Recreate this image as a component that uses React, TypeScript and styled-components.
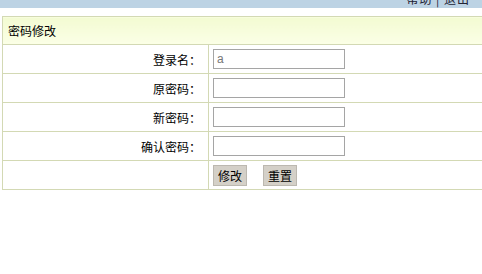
import styled, { createGlobalStyle } from 'styled-components'

const GlobalStyle = createGlobalStyle`
    html, body {
        margin: 0;
        padding: 0;
        overflow: hidden;
        background: #fff;
        font-family: "Noto Sans CJK SC", "Liberation Sans", sans-serif;
        font-size: 12px;
        color: #000;
    }
`

const TopBar = styled.div`
    height: 8px;
    background: #bdd3e4;
    overflow: hidden;
    display: flex;
    justify-content: flex-end;
    padding-right: 12px;
`

const TopLinks = styled.span`
    margin-top: -9px;
    line-height: 16px;
    font-size: 12px;
    color: #223;
    letter-spacing: 1px;
`

const Page = styled.div`
    padding: 8px 0 0 2px;
`

const Table = styled.table`
    width: 490px;
    border-collapse: collapse;
    border: 1px solid #d3d9b4;
`

const HeadCell = styled.th`
    height: 27px;
    padding: 0 0 0 5px;
    text-align: left;
    font-weight: normal;
    background: linear-gradient(#f3fbd2, #fbffe6);
    border: 1px solid #d3d9b4;
`

const LabelCell = styled.td`
    width: 198px;
    height: 28px;
    padding: 0 7px 0 0;
    text-align: right;
    border: 1px solid #d3d9b4;
`

const FieldCell = styled.td`
    padding: 0 0 0 4px;
    border: 1px solid #d3d9b4;
`

const Input = styled.input`
    box-sizing: border-box;
    width: 132px;
    height: 20px;
    margin: 0;
    padding: 0 3px;
    border: 1px solid #a5a5a5;
    font-family: "Liberation Sans", sans-serif;
    font-size: 12px;
    color: #777;
    vertical-align: middle;
`

const Buttons = styled.div`
    display: flex;
    gap: 16px;
`

const Button = styled.button`
    box-sizing: border-box;
    height: 21px;
    padding: 0 4px;
    background: #d4d0c8;
    border: 1px solid #bcb8b0;
    font-family: "Noto Sans CJK SC", sans-serif;
    font-size: 12px;
    line-height: 19px;
    color: #000;
`

const rows = [
    { label: '登录名：', value: 'a', type: 'text' },
    { label: '原密码：', value: '', type: 'password' },
    { label: '新密码：', value: '', type: 'password' },
    { label: '确认密码：', value: '', type: 'password' },
]

export default function App() {
    return (
        <>
            <GlobalStyle />
            <TopBar>
                <TopLinks>帮助 | 退出</TopLinks>
            </TopBar>
            <Page>
                <Table>
                    <thead>
                        <tr>
                            <HeadCell colSpan={2}>密码修改</HeadCell>
                        </tr>
                    </thead>
                    <tbody>
                        {rows.map((r) => (
                            <tr key={r.label}>
                                <LabelCell>{r.label}</LabelCell>
                                <FieldCell>
                                    <Input type={r.type} defaultValue={r.value} />
                                </FieldCell>
                            </tr>
                        ))}
                        <tr>
                            <LabelCell />
                            <FieldCell>
                                <Buttons>
                                    <Button>修改</Button>
                                    <Button>重置</Button>
                                </Buttons>
                            </FieldCell>
                        </tr>
                    </tbody>
                </Table>
            </Page>
        </>
    )
}
